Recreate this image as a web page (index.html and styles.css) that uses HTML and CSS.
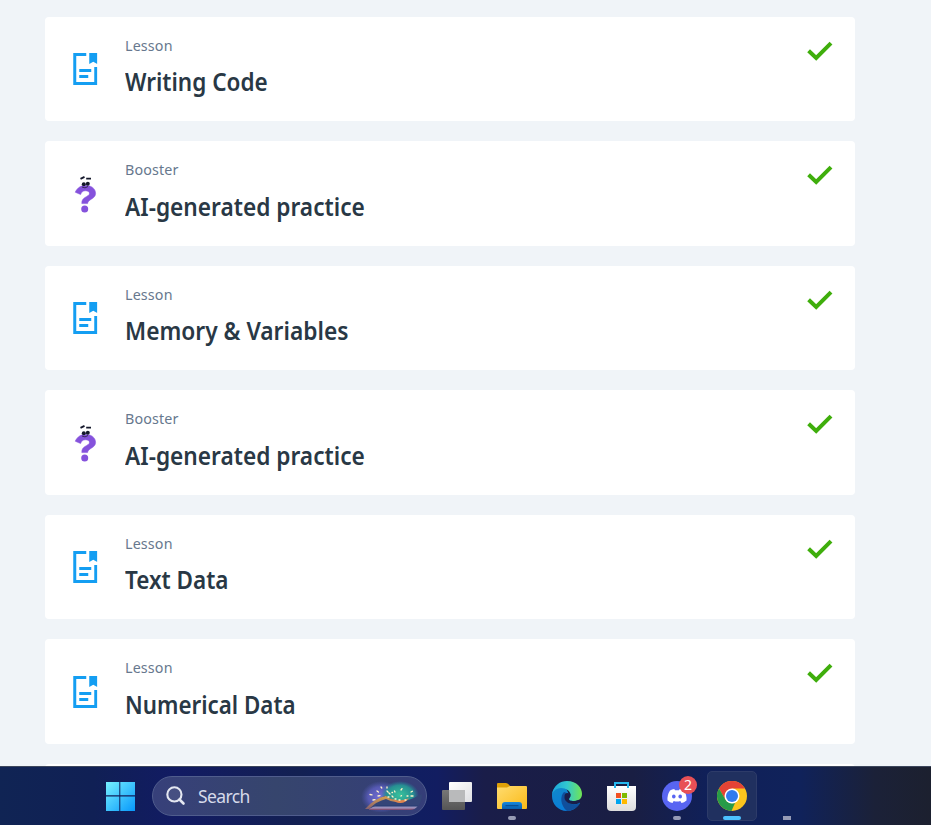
FILE: index.html
```html
<!DOCTYPE html>
<html lang="en">
<head>
<meta charset="utf-8">
<title>Lessons</title>
<link rel="stylesheet" href="styles.css">
</head>
<body>
<svg class="defs" aria-hidden="true">
  <symbol id="doc" viewBox="0 0 24 32">
    <path d="M13 1.5H1.5V30.5H22.5V14" fill="none" stroke="#149ef2" stroke-width="3"/>
    <path d="M16 0H24V11L20 8.7L16 11Z" fill="#149ef2"/>
    <path d="M6 17.5H18M6 23.5H15" stroke="#149ef2" stroke-width="3"/>
  </symbol>
  <symbol id="booster" viewBox="0 0 24 38">
    <path d="M2.2 17.2C4.5 12.2 8.3 10.4 12.5 10.4C18.5 10.4 22.6 13.6 22.6 18.5C22.6 24 14.8 24.2 14.6 28.6H8.8C8.2 21.5 16.4 22 16.4 18.4C16.4 16.6 14.8 15.8 12.4 15.8C9.8 15.8 8.6 17 7.6 19.6Z" fill="#8552dc" stroke="#8552dc" stroke-width=".5"/>
    <circle cx="11.7" cy="33.9" r="3.5" fill="#8552dc"/>
    <path d="M9 12Q12 14 15 11.5" fill="none" stroke="#352958" stroke-width="1"/>
    <g fill="#14182b"><circle cx="10.8" cy="9.2" r="2"/><circle cx="14.8" cy="8.7" r="2"/></g>
    <path d="M7.5 3.9L11.5 1.9M13.2 3.7H18" stroke="#14182b" stroke-width="1.8"/>
  </symbol>
  <symbol id="check" viewBox="0 0 26 20">
    <path d="M1.6 9.8L9.2 17L24 2.2" fill="none" stroke="#3fae0c" stroke-width="4"/>
  </symbol>
</svg>
<main class="lessons">
  <article class="card"><svg class="doc"><use href="#doc"/></svg><div class="copy"><p>Lesson</p><h2 class="writing">Writing Code</h2></div><svg class="check"><use href="#check"/></svg></article>
  <article class="card"><svg class="booster"><use href="#booster"/></svg><div class="copy"><p>Booster</p><h2 class="practice">AI-generated practice</h2></div><svg class="check"><use href="#check"/></svg></article>
  <article class="card"><svg class="doc"><use href="#doc"/></svg><div class="copy"><p>Lesson</p><h2 class="memory">Memory &amp; Variables</h2></div><svg class="check"><use href="#check"/></svg></article>
  <article class="card"><svg class="booster"><use href="#booster"/></svg><div class="copy"><p>Booster</p><h2 class="practice">AI-generated practice</h2></div><svg class="check"><use href="#check"/></svg></article>
  <article class="card"><svg class="doc"><use href="#doc"/></svg><div class="copy"><p>Lesson</p><h2 class="textdata">Text Data</h2></div><svg class="check"><use href="#check"/></svg></article>
  <article class="card"><svg class="doc"><use href="#doc"/></svg><div class="copy"><p>Lesson</p><h2 class="numerical">Numerical Data</h2></div><svg class="check"><use href="#check"/></svg></article>
  <article class="card"></article>
</main>
<footer class="taskbar">
  <div class="slot">
    <svg width="30" height="30" viewBox="0 0 30 30"><defs><linearGradient id="win" gradientUnits="userSpaceOnUse" x1="0" y1="0" x2="30" y2="30"><stop stop-color="#7af3ff"/><stop offset="1" stop-color="#0798fb"/></linearGradient></defs><path d="M1 1H14.3V14.3H1ZM15.3 1H30V14.3H15.3ZM1 15.5H14.3V30H1ZM15.3 15.5H30V30H15.3Z" fill="url(#win)"/></svg>
  </div>
  <div class="search">
    <svg class="glass" width="20" height="20" viewBox="0 0 20 20"><circle cx="8.4" cy="8.4" r="7.1" fill="#ffffff14" stroke="#e4e7f1" stroke-width="2.1"/><path d="M13.5 13.5L17.5 17.5" stroke="#e4e7f1" stroke-width="2.6" stroke-linecap="round"/></svg>
    <span>Search</span>
    <svg class="scene" width="62" height="32" viewBox="0 0 62 32">
      <defs>
        <radialGradient id="violet"><stop stop-color="#7771d7"/><stop offset=".65" stop-color="#585bb8" stop-opacity=".9"/><stop offset="1" stop-color="#4e55a8" stop-opacity="0"/></radialGradient>
        <radialGradient id="teal"><stop stop-color="#38c39c"/><stop offset=".7" stop-color="#278f92"/><stop offset="1" stop-color="#287899" stop-opacity="0"/></radialGradient>
        <linearGradient id="shore" x2="0" y2="1"><stop stop-color="#d9a04d"/><stop offset="1" stop-color="#85616f"/></linearGradient>
        <linearGradient id="water" x2="0" y2="1"><stop stop-color="#243c73"/><stop offset=".5" stop-color="#a79bc4"/><stop offset="1" stop-color="#743b60"/></linearGradient>
      </defs>
      <ellipse cx="20" cy="17" rx="20" ry="16" fill="url(#violet)"/><ellipse cx="39" cy="15" rx="19" ry="14" fill="url(#teal)"/>
      <path d="M5 29Q17 18 24 16L37 22Q46 22 61 14Q61 24 54 29Z" fill="#344578"/>
      <path d="M4 29Q14 18 25 16Q34 23 46 19Q44 24 37 22.5Q30 22 25 19Q16 21 8 29Z" fill="url(#shore)"/>
      <path d="M28 17Q38 24 48 18Q43 25 35 22Z" fill="#e0844e"/>
      <path d="M8 29L15 25.5H57Q54 30 49 30H8Z" fill="url(#water)"/>
      <g stroke="#fff3c9" stroke-width="1.3" stroke-linecap="round"><path d="M9 14.5l2 .4M12 20l2-.4M16 11l1.4 1M20 7l.8 1M17 16l2-.3M26 7v1M26 11l1 1M28 13l1 1M31 16l1 1M34 19h1M38 20h1M40 16l.5-.4M40 10l1-1.4M50 12l1.4-.8M46 16h1M50 16h2M44 20h1M27 17h1M34 12l-.5-1M31 12.5h.5"/></g>
    </svg>
  </div>
  <div class="slot">
    <svg width="30" height="28" viewBox="0 0 30 28"><defs><linearGradient id="sheet" x2="1" y2="1"><stop stop-color="#fff"/><stop offset="1" stop-color="#dedfe2"/></linearGradient><linearGradient id="gray" x2="0" y2="1"><stop stop-color="#777"/><stop offset="1" stop-color="#555"/></linearGradient></defs><rect y="8" width="23" height="20" rx="1" fill="url(#gray)"/><rect x="7" width="23" height="20" rx="1" fill="url(#sheet)"/><path d="M7 8H23V20H7Z" fill="#b9babb"/></svg>
  </div>
  <div class="slot">
    <svg width="30" height="28" viewBox="0 0 30 28"><defs><linearGradient id="folder" x2="1" y2="1"><stop stop-color="#ffdc70"/><stop offset="1" stop-color="#fbba17"/></linearGradient><linearGradient id="tray" x2="0" y2="1"><stop stop-color="#1787dc"/><stop offset="1" stop-color="#075fb0"/></linearGradient></defs><path d="M0 2Q0 1 1 1H9Q11 1 13 4H29V10H0Z" fill="#dfa007"/><path d="M0 5.5H10L13 4H29Q30 4 30 5V26Q30 27 29 27H1Q0 27 0 26Z" fill="url(#folder)"/><path d="M5 27V23Q5 20 8 20H22Q25 20 25 23V27Z" fill="url(#tray)"/><path d="M9 23.7H21" stroke="#084f95" stroke-width="1.2" stroke-linecap="round"/></svg><i class="dot"></i>
  </div>
  <div class="slot">
    <svg width="30" height="30" viewBox="0 0 30 30"><defs><linearGradient id="edge-top"><stop stop-color="#1aa5dc"/><stop offset=".5" stop-color="#32c8d0"/><stop offset="1" stop-color="#70e553"/></linearGradient><linearGradient id="edge-left" x2=".5" y2="1"><stop stop-color="#128bc9"/><stop offset="1" stop-color="#087bd9"/></linearGradient></defs><path d="M0 13C2 4 8 1 14 7L19 18L28 22C25 27 20 30 15 30C6 30 0 23 0 15Z" fill="url(#edge-left)"/><path d="M0 13C2 4 8 0 15 0C25 0 30 7 30 13C30 18 26 20 22 20C18 20 17 19 17 18C17 17 18.5 17 18.5 14C18.5 10 14 7 9 7C5 7 2 9 0 13Z" fill="url(#edge-top)"/><path d="M12 11C8 15 8 24 15 30C21 30 26 26 28 22C23 25 14 23 13 17C12.5 14 13.5 12 15 12Z" fill="#104f9c"/><path d="M18.5 13Q12 10 12.5 17C13 22 21 25 27.5 22L27 19Q24 20 22 20C18 20 17 19 17 18Q18.5 16 18.5 13Z" fill="#191e49"/></svg>
  </div>
  <div class="slot">
    <svg width="30" height="30" viewBox="0 0 30 30"><defs><linearGradient id="bag" x2="0" y2="1"><stop stop-color="#fff"/><stop offset="1" stop-color="#ddd"/></linearGradient></defs><path d="M0 5H29V26Q29 30 25 30H4Q0 30 0 26Z" fill="url(#bag)"/><path d="M8 7V2H21V7" fill="none" stroke="#26b7ee" stroke-width="2"/><path d="M9 12H14V17H9Z" fill="#f25022"/><path d="M15 12H20V17H15Z" fill="#7fba00"/><path d="M9 18H14V23H9Z" fill="#00a4ef"/><path d="M15 18H20V23H15Z" fill="#ffb900"/></svg>
  </div>
  <div class="slot">
    <svg width="30" height="30" viewBox="0 0 30 30"><circle cx="15" cy="15" r="15" fill="#5865f2"/><path d="M8 9.5Q10 8.3 12.3 8L13 9.2H17L17.7 8Q20 8.3 22 9.5Q25 14 24.5 19.5Q22 21.5 19.5 22L18.3 20Q15 21 11.7 20L10.5 22Q8 21.5 5.5 19.5Q5 14 8 9.5Z" fill="#fff"/><ellipse cx="11.8" cy="15.5" rx="1.8" ry="2" fill="#5865f2"/><ellipse cx="18.2" cy="15.5" rx="1.8" ry="2" fill="#5865f2"/></svg><b class="badge">2</b><i class="dot"></i>
  </div>
  <div class="slot active">
    <svg width="30" height="30" viewBox="0 0 30 30"><circle cx="15" cy="15" r="15" fill="#fbc41d"/><path d="M2 7.5A15 15 0 0 1 28 7.5H15V15L8.5 18.8Z" fill="#e54335"/><path d="M2 7.5L8.5 18.8Q11 23 18 22L14.5 30A15 15 0 0 1 2 7.5Z" fill="#279b48"/><circle cx="15" cy="15" r="7.5" fill="#fff"/><circle cx="15" cy="15" r="6" fill="#337bef"/></svg><i class="dot"></i>
  </div>
  <div class="slot"><i class="dot square"></i></div>
</footer>
</body>
</html>
```
FILE: styles.css
```css
* { box-sizing: border-box; }
body { margin: 0; width: 931px; height: 825px; overflow: hidden; background: #f0f4f8; display: flex; flex-direction: column; }
.defs { position: absolute; width: 0; height: 0; }
.lessons { height: 766px; flex: none; overflow: hidden; padding: 16.8px 76px 0 45px; display: flex; flex-direction: column; gap: 20px; }
.card { height: 104.5px; flex: none; background: #fff; border-radius: 4px; display: flex; align-items: flex-start; padding-right: 22.5px; }
.doc { width: 24.5px; height: 32px; margin: 36.3px 27.5px 0 28px; }
.booster { width: 24px; height: 38px; margin: 34px 28px 0; }
.copy { flex: 1; padding-top: 19px; }
.copy p { margin: 0; font: 400 14.3px/20px "Noto Sans", sans-serif; letter-spacing: .15px; color: #67788e; }
.copy h2 { margin: 7.4px 0 0; width: max-content; font: 600 25px/36px "Noto Sans", sans-serif; color: #293845; transform-origin: left; transform: scaleX(.9); }
.copy .practice { transform: scaleX(.907); }
.copy .memory { transform: scaleX(.91); }
.copy .numerical { transform: scaleX(.894); }
.check { width: 26px; height: 20px; margin-top: 24.2px; }
.taskbar { height: 59px; flex: none; display: flex; align-items: center; gap: 5px; padding: 0 0 1px 95px; border-top: 1px solid #3c465c; background: linear-gradient(90deg, #102454, #102055 10%, #121b63 19%, #132052 32%, #0e2061 40%, #121d61 47%, #1a1d49 52%, #191e43 68%, #102059 76%, #10225a 86%, #1b2138 94%, #1c202f); }
.slot { position: relative; width: 50px; height: 50px; flex: none; display: flex; align-items: center; justify-content: center; border-radius: 5px; }
.search { width: 275px; height: 40px; margin: 0 0 0 2px; flex: none; display: flex; align-items: center; border: 1px solid #505d8d; border-radius: 20px; background: linear-gradient(90deg, #37407a, #36456d 45%, #353e79); padding-left: 13px; }
.search span { flex: 1; margin-left: 12px; font: 400 17.5px/24px "Noto Sans", sans-serif; color: #d6daea; letter-spacing: -.6px; }
.scene { margin-right: 3px; }
.active { background: #20305f; border: 1px solid #2d3b69; }
.dot { position: absolute; bottom: 1px; left: 21px; width: 8px; height: 4px; border-radius: 2px; background: #969bb5; }
.active .dot { left: 15px; bottom: 0; width: 18px; background: #4cc2ff; }
.dot.square { border-radius: 0; }
.badge { position: absolute; left: 27px; top: 5px; width: 18px; height: 18px; border-radius: 50%; background: #e85056; color: #fff; text-align: center; font: 400 14px/18px "Noto Sans", sans-serif; }
```
